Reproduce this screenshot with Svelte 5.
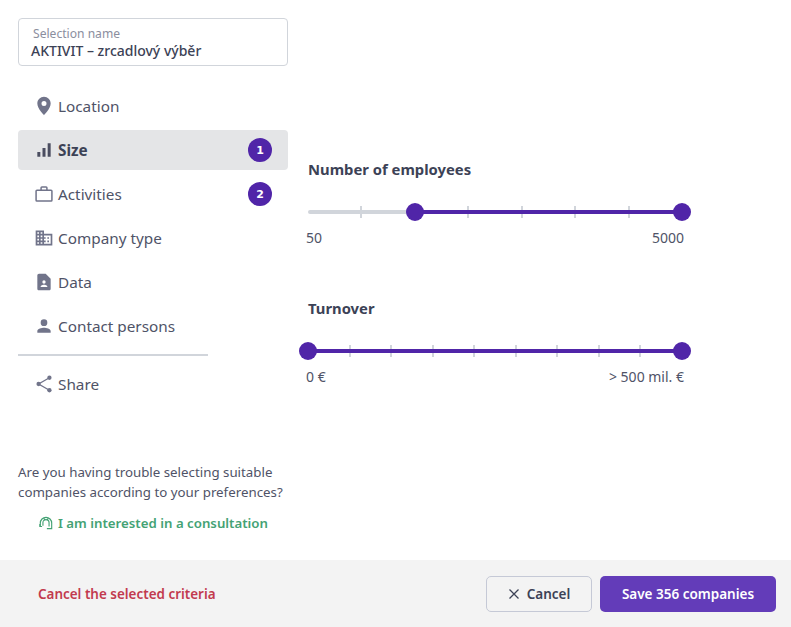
<script>
  const nav = [
    { label: "Location", icon: "pin" },
    { label: "Size", icon: "bars", active: true, badge: 1 },
    { label: "Activities", icon: "case", badge: 2 },
    { label: "Company type", icon: "domain" },
    { label: "Data", icon: "doc" },
    { label: "Contact persons", icon: "person" },
  ];
  const paths = {
    pin: "M12 1C7.600 1 4 4.600 4 9c0 6 8 14 8 14s8-8 8-14c0-4.400-3.600-8-8-8zm0 11a3 3 0 1 1 0-6 3 3 0 0 1 0 6z",
    bars: "M4 14.500h3.600V20H4zM10.200 9.500h3.600V20h-3.600zM16.400 4H20v16h-3.600z",
    domain: "M12 7V3H2v18h20V7H12zM6 19H4v-2h2v2zm0-4H4v-2h2v2zm0-4H4V9h2v2zm0-4H4V5h2v2zm4 12H8v-2h2v2zm0-4H8v-2h2v2zm0-4H8V9h2v2zm0-4H8V5h2v2zm10 12h-8v-2h2v-2h-2v-2h2v-2h-2V9h8v10zm-2-8h-2v2h2v-2zm0 4h-2v2h2v-2z",
    doc: "M14 2H6c-1.100 0-2 .9-2 2v16c0 1.100.9 2 2 2h12c1.100 0 2-.9 2-2V8l-6-6zm-2 8a2 2 0 1 1 0 4 2 2 0 0 1 0-4zm4 8H8v-.6c0-1.300 2.700-2 4-2s4 .7 4 2v.6z",
    person: "M12 12a4 4 0 1 0 0-8 4 4 0 0 0 0 8zm0 2c-2.700 0-8 1.300-8 4v2h16v-2c0-2.700-5.300-4-8-4z",
  };
  const sliders = [
    { title: "Number of employees", min: "50", max: "5000", steps: 7, from: 2 },
    { title: "Turnover", min: "0 €", max: "> 500 mil. €", steps: 9, from: 0 },
  ];
</script>

<div class="page">
  <div class="body">
    <aside>
      <div class="name">
        <span>Selection name</span>
        <strong>AKTIVIT – zrcadlový výběr</strong>
      </div>

      <nav>
        {#each nav as item}
          <div class="item" class:active={item.active}>
            <svg class="icon" viewBox="0 0 24 24" width="20" height="20">
              {#if item.icon === "case"}
                <path d="M3.500 7.500h17a1 1 0 0 1 1 1v11a1 1 0 0 1-1 1h-17a1 1 0 0 1-1-1v-11a1 1 0 0 1 1-1zM8.500 7.500V4.500a1 1 0 0 1 1-1h5a1 1 0 0 1 1 1v3" fill="none" stroke="currentColor" stroke-width="1.800" />
              {:else}
                <path d={paths[item.icon]} fill="currentColor" />
              {/if}
            </svg>
            <span>{item.label}</span>
            {#if item.badge}<b>{item.badge}</b>{/if}
          </div>
        {/each}
      </nav>

      <hr />

      <div class="item share">
        <svg class="icon" viewBox="0 0 24 24" width="20" height="20">
          <path d="M18.500 4.500 5.500 12l13 7.500" fill="none" stroke="currentColor" stroke-width="1.600" />
          <circle cx="18.500" cy="4.500" r="2.600" fill="currentColor" />
          <circle cx="5.500" cy="12" r="2.600" fill="currentColor" />
          <circle cx="18.500" cy="19.500" r="2.600" fill="currentColor" />
        </svg>
        <span>Share</span>
      </div>

      <p class="help">Are you having trouble selecting suitable companies according to your preferences?</p>
      <a class="consult" href="#consult">
        <svg viewBox="0 0 16 16" width="14" height="14" fill="none" stroke="currentColor" stroke-width="1.300">
          <path d="M1.500 12V8a6.500 6.500 0 0 1 13 0v6.500H9" />
          <path d="M1 9v3h2.500M4.500 11V7.500a3.500 3.500 0 0 1 7 0V12" />
          <path d="M5.500 2.500 7 5.500M10.500 2.500 9 5.500" />
        </svg>
        I am interested in a consultation
      </a>
    </aside>

    <main>
      {#each sliders as s}
        <section>
          <h3>{s.title}</h3>
          <div class="slider">
            {#each Array(s.steps - 1) as _, i}
              <i style="left: {((i + 1) / s.steps) * 100}%"></i>
            {/each}
            <div class="fill" style="left: {(s.from / s.steps) * 100}%"></div>
            <em style="left: {(s.from / s.steps) * 100}%"></em>
            <em style="left: 100%"></em>
          </div>
          <div class="ends"><span>{s.min}</span><span>{s.max}</span></div>
        </section>
      {/each}
    </main>
  </div>

  <footer>
    <a class="reset" href="#reset">Cancel the selected criteria</a>
    <div class="actions">
      <button class="cancel">
        <svg viewBox="0 0 12 12" width="12" height="12"><path d="M1.500 1.500l9 9M10.500 1.500l-9 9" stroke="currentColor" stroke-width="1.300" fill="none" /></svg>
        Cancel
      </button>
      <button class="save">Save 356 companies</button>
    </div>
  </footer>
</div>

<style>
  :global(body) { background: #fff; }
  .page { width: 791px; height: 627px; display: flex; flex-direction: column; font-family: "Noto Sans", sans-serif; font-size: 15.3px; color: #4f5367; overflow: hidden; }
  .body { height: 560px; display: flex; }
  aside { width: 270px; margin-left: 18px; padding-top: 18px; }
  .name { height: 48px; box-sizing: border-box; border: 1px solid #d1d5db; border-radius: 4px; padding: 7px 12px 0; display: flex; flex-direction: column; }
  .name span { font-size: 12.1px; line-height: 15px; color: #8b8e9e; margin-left: 2px; }
  .name strong { font-size: 14px; line-height: 19px; font-weight: 500; color: #3c4256; }
  nav { margin-top: 20px; display: flex; flex-direction: column; gap: 4px; }
  .item { height: 40px; display: flex; align-items: center; gap: 4px; padding: 0 16px; border-radius: 4px; color: #4f5367; }
  .item span { flex: 1; }
  .icon { color: #71748a; flex: none; }
  .item.active { background: #e4e5e7; font-weight: 700; color: #3c4256; }
  .item.active .icon { color: #4a4d60; }
  .item b { width: 24px; height: 24px; border-radius: 50%; background: #5025a8; color: #fff; font-family: "DejaVu Sans", sans-serif; font-size: 11px; font-weight: 700; display: flex; align-items: center; justify-content: center; }
  hr { width: 190px; margin: 8px 0 8px; border: 0; border-top: 2px solid #d1d5db; }
  .share { height: 40px; }
  .help { margin: 58px 0 0; font-size: 13.3px; line-height: 20px; color: #4f5367; width: 270px; }
  .consult { margin: 12px 0 0 21px; display: flex; align-items: center; gap: 5px; color: #44a274; font-size: 13.25px; font-weight: 600; text-decoration: none; }
  main { flex: 1; padding: 159px 0 0 20px; }
  section { width: 374px; height: 139px; }
  h3 { margin: 0; font-size: 14.8px; line-height: 20px; font-weight: 700; color: #3c4256; }
  .slider { position: relative; height: 4px; margin-top: 31px; background: #d1d5db; border-radius: 2px; }
  .fill { position: absolute; top: 0; bottom: 0; right: 0; background: #5025a8; border-radius: 2px; }
  .slider i { position: absolute; top: -4px; width: 2px; height: 12px; margin-left: -1px; background: #d1d5db; }
  .slider em { position: absolute; top: -7px; width: 18px; height: 18px; margin-left: -9px; border-radius: 50%; background: #5025a8; }
  .ends { display: flex; justify-content: space-between; margin: 14px -2px 0 -2px; font-size: 14px; line-height: 20px; color: #4f5367; }
  footer { height: 67px; background: #f3f3f3; display: flex; align-items: center; justify-content: space-between; padding: 0 15px 0 38px; }
  .reset { color: #c23a4e; font-size: 13.45px; font-weight: 600; text-decoration: none; }
  .actions { display: flex; gap: 8px; }
  button { height: 36px; border-radius: 5px; font: inherit; font-size: 13.5px; font-weight: 600; display: flex; align-items: center; justify-content: center; gap: 7px; }
  .cancel { width: 106px; background: transparent; border: 1px solid #c5c9d6; color: #3c4256; }
  .save { width: 176px; background: #633cb9; border: 0; color: #fff; }
</style>
